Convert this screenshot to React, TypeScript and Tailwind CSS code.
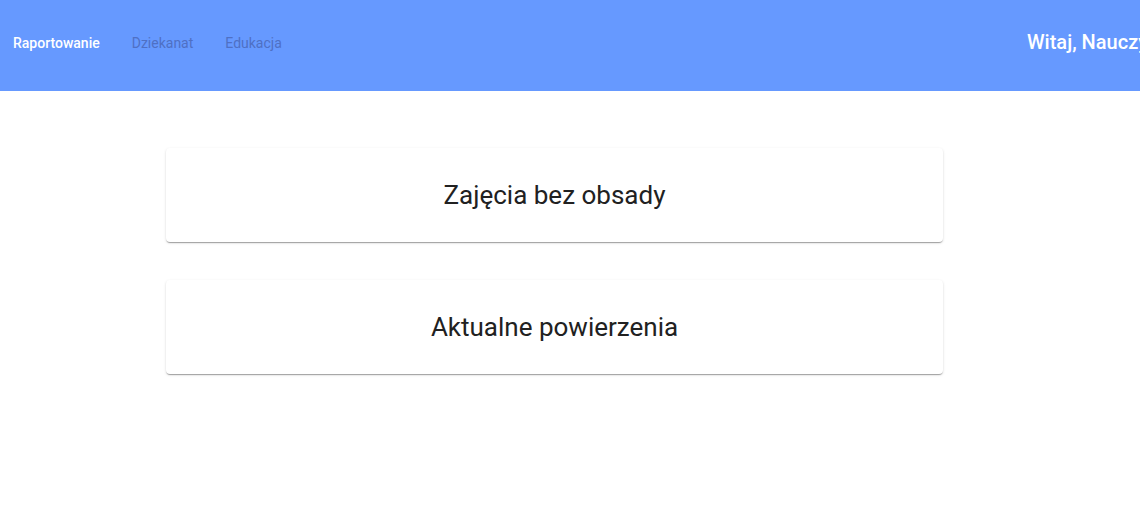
import React from "react";

const navItems = [
  { label: "Raportowanie", active: true },
  { label: "Dziekanat", active: false },
  { label: "Edukacja", active: false },
];

const cards = ["Zajęcia bez obsady", "Aktualne powierzenia"];

export default function App() {
  return (
    <div
      className="w-[1140px] h-[517px] overflow-hidden bg-white"
      style={{ fontFamily: "Roboto, 'Liberation Sans', sans-serif" }}
    >
      <header className="h-[91px] bg-[#6699ff] flex items-center justify-between whitespace-nowrap pb-[4px]">
        <nav className="flex items-center pl-[13px] gap-[32px]">
          {navItems.map((item) => (
            <a
              key={item.label}
              className={
                item.active
                  ? "text-[14px] font-medium text-white"
                  : "text-[14px] text-[#4f70c4]"
              }
            >
              {item.label}
            </a>
          ))}
        </nav>
        <div className="text-[20px] font-medium text-white mr-[-63px] pb-[4px] w-[176px]">
          Witaj, Nauczyciel
        </div>
      </header>

      <main className="pt-[57px] pl-[166px] flex flex-col gap-[38px]">
        {cards.map((title) => (
          <div
            key={title}
            className="w-[777px] h-[94px] rounded-[4px] bg-white flex items-center justify-center shadow-[0_2px_1px_-1px_rgba(0,0,0,0.2),0_1px_1px_0_rgba(0,0,0,0.14),0_1px_3px_0_rgba(0,0,0,0.12)]"
          >
            <h2 className="text-[26px] text-[#212121] font-normal">{title}</h2>
          </div>
        ))}
      </main>
    </div>
  );
}
